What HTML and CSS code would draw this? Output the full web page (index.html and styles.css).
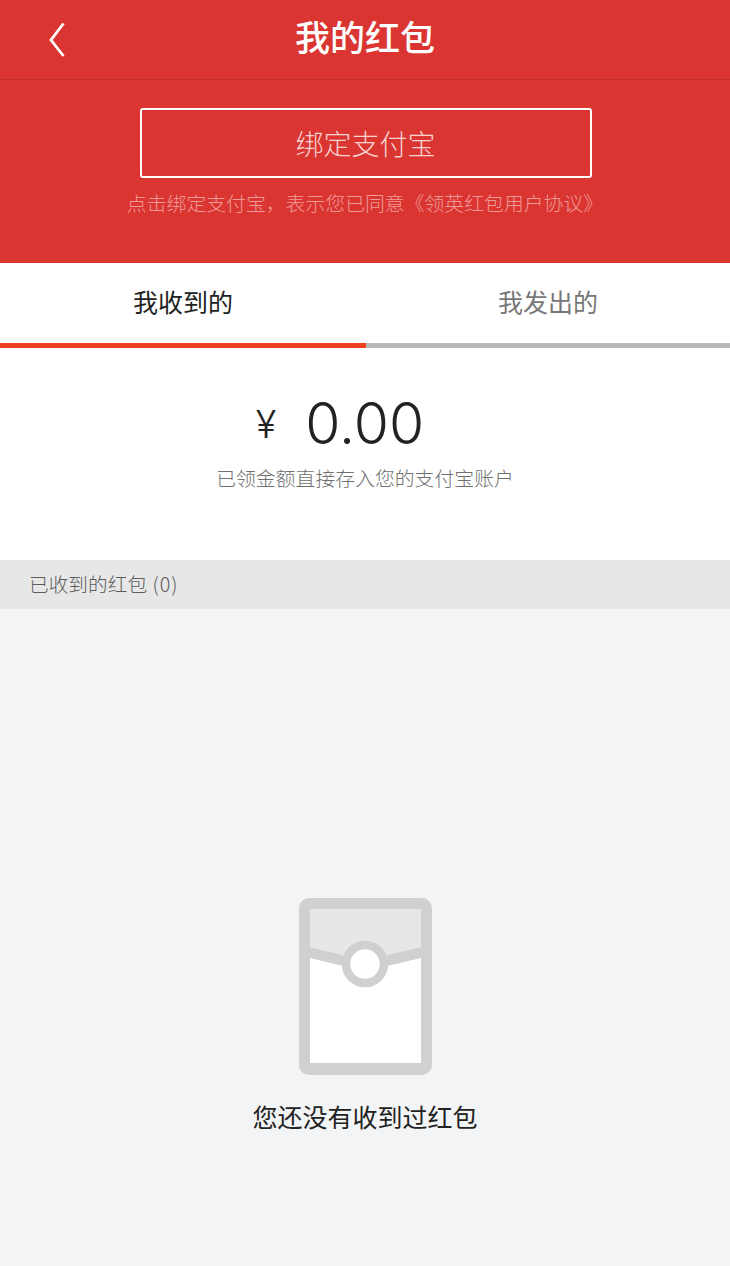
FILE: index.html
```html
<!DOCTYPE html>
<html lang="zh-CN">
<head>
    <meta charset="UTF-8">
    <meta name="viewport" content="width=device-width, initial-scale=1.0">
    <title>我的红包</title>
    <link rel="stylesheet" href="styles.css">
</head>
<body>

    <header class="top">
        <nav class="nav">
            <a class="back" href="#" aria-label="返回">
                <svg width="16" height="36" viewBox="0 0 16 36"><path d="M14.5 1.5 L2 18 L14.5 34" fill="none" stroke="#fff" stroke-width="2.8"/></svg>
            </a>
            <h1 class="nav-title">我的红包</h1>
        </nav>
        <div class="bind">
            <button class="bind-btn" type="button">绑定支付宝</button>
            <p class="bind-note">点击绑定支付宝，表示您已同意《领英红包用户协议》</p>
        </div>
    </header>

    <div class="tabs">
        <div class="tab active">我收到的</div>
        <div class="tab">我发出的</div>
    </div>

    <section class="summary">
        <div class="amount"><span class="yen">¥</span><span class="num">0.00</span></div>
        <p class="summary-note">已领金额直接存入您的支付宝账户</p>
    </section>

    <div class="list-head">已收到的红包 <span class="count">(0)</span></div>

    <section class="empty">
        <svg class="empty-icon" width="133" height="177" viewBox="0 0 133 177">
            <rect width="133" height="177" rx="10" fill="#cfd0d2"/>
            <rect x="11" y="11" width="111" height="154" fill="#fff"/>
            <path d="M11 11 H122 V49 L88 57 H44 L11 49 Z" fill="#e6e7e9"/>
            <path d="M11 49 L44 57 V68 L11 60 Z M122 49 L88 57 V68 L122 60 Z" fill="#cfd0d2"/>
            <circle cx="66" cy="66" r="19" fill="#fff" stroke="#cfd0d2" stroke-width="8.5"/>
        </svg>
        <p class="empty-text">您还没有收到过红包</p>
    </section>

</body>
</html>
```

FILE: styles.css
```css
* {
    box-sizing: border-box;
}
body {
    margin: 0;
    width: 730px;
    height: 1266px;
    display: flex;
    flex-direction: column;
    font-family: "Noto Sans CJK SC", "Noto Sans", sans-serif;
    font-weight: 300;
    background-color: #f3f4f6;
    color: #222;
}
p, h1 {
    margin: 0;
}
.top {
    height: 263px;
    background-color: #da3531;
    color: #fff;
}
.nav {
    height: 80px;
    display: grid;
    grid-template-columns: 1fr auto 1fr;
    align-items: center;
    border-bottom: 1px solid #c62f2d;
}
.back {
    display: flex;
    padding-left: 49px;
    padding-top: 1px;
}
.nav-title {
    font-size: 35px;
    line-height: 72px;
    padding-bottom: 7px;
    font-weight: 500;
}
.bind {
    display: flex;
    flex-direction: column;
    align-items: center;
    padding-top: 28px;
}
.bind-btn {
    width: 452px;
    height: 70px;
    margin-left: 1px;
    background: none;
    border: 2px solid #fff;
    border-radius: 3px;
    color: #f8d2d1;
    font-family: inherit;
    font-weight: 300;
    font-size: 28px;
}
.bind-note {
    margin-top: 11px;
    font-size: 19.85px;
    line-height: 28px;
    white-space: nowrap;
    color: #f09a97;
}
.tabs {
    display: flex;
    height: 85px;
    background-color: #fff;
}
.tab {
    flex: 1;
    text-align: center;
    font-size: 25px;
    line-height: 76px;
    font-weight: 400;
    color: #777;
    border-bottom: 5px solid #b9b9b9;
}
.tab.active {
    flex: 0 0 366px;
    color: #222;
    border-bottom-color: #f0411f;
}
.summary {
    height: 212px;
    background-color: #fff;
    padding-top: 42px;
    text-align: center;
}
.amount {
    display: flex;
    justify-content: center;
    align-items: center;
    height: 70px;
    padding-right: 50px;
    padding-bottom: 3px;
    font-family: Inter, sans-serif;
    font-weight: 300;
}
.yen {
    font-size: 38px;
    margin-right: 29px;
}
.num {
    font-size: 57px;
}
.summary-note {
    margin-top: 4px;
    font-size: 19.85px;
    line-height: 28px;
    color: #6f6f6f;
}
.list-head {
    height: 49px;
    padding-left: 29px;
    background-color: #e7e7e7;
    font-size: 19.7px;
    line-height: 47px;
    color: #5c5c5c;
}
.count {
    letter-spacing: 1px;
    margin-left: 1px;
}
.empty {
    flex: 1;
    display: flex;
    flex-direction: column;
    align-items: center;
    padding-top: 289px;
}
.empty-text {
    margin-top: 23px;
    font-size: 25px;
    line-height: 36px;
    font-weight: 400;
}
```
